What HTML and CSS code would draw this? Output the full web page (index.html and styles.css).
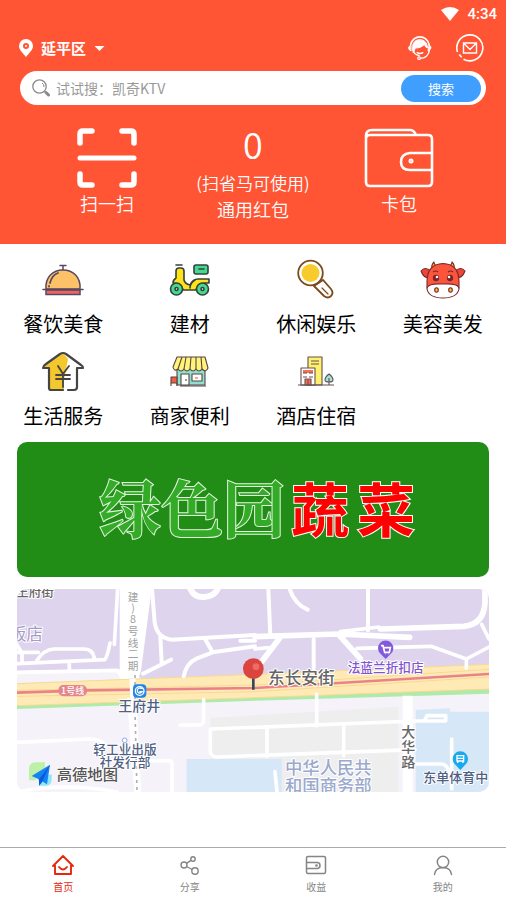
FILE: index.html
```html
<!DOCTYPE html>
<html lang="zh-CN">
<head>
  <meta charset="UTF-8" />
  <meta name="viewport" content="width=device-width, initial-scale=1" />
  <title>首页</title>
  <link rel="stylesheet" href="styles.css">
</head>
<body>

<header class="header">
  <div class="status-bar">
    <svg width="18" height="14" viewBox="0 0 18 14"><path d="M0 3Q9-3 18 3L9 14Z" fill="#fff"/></svg>
    <span>4:34</span>
  </div>

  <div class="top-row">
    <button class="location" type="button">
      <svg width="14" height="18" viewBox="0 0 14 18"><path fill="#fff" fill-rule="evenodd" d="M7 0a7 7 0 0 1 7 7c0 4-4 7-7 11C4 14 0 11 0 7a7 7 0 0 1 7-7zm0 4a3 3 0 1 0 0 6 3 3 0 0 0 0-6z"/><circle cx="7" cy="7" r="1" fill="#fff"/></svg>
      <span>延平区</span>
      <svg width="11" height="5" viewBox="0 0 12 6"><path d="M0 0h12L6 6z" fill="#fff"/></svg>
    </button>
    <div class="top-actions">
      <button class="icon-btn" type="button" aria-label="客服">
        <svg width="26" height="28" viewBox="0 0 28 28" fill="none" stroke="#fff" stroke-linecap="round">
          <path d="M4 10C6 4 10 2 14 2s9 3 10 9" stroke-width="1.800"/>
          <path d="M4 11c-3 1-3 5 0 6zM24 11c3 1 2 5-1 6z" fill="#fff"/>
          <path d="M6 13C6 7 10 5 14 5s8 3 8 9c-2-1-3-2-3-4-3 3-6 4-10 4l-2 5z" fill="#fff"/>
          <path d="M6 15c1 4 3 7 7 7M24 17c-1 5-5 8-10 8M11 19q3 2 6 0" stroke-width="1.500"/>
          <circle cx="13" cy="25" r="1.400" fill="#ff5534" stroke-width="1.300"/>
        </svg>
      </button>
      <button class="icon-btn" type="button" aria-label="消息">
        <svg width="28" height="28" viewBox="0 0 28 28" fill="none" stroke="#fff" stroke-width="1.600">
          <path d="M1.500 18A13 13 0 1 1 7.500 25.200M3.200 20.500l2.500 2.800"/>
          <path d="M7.500 9h13v10h-13zM8 9.500l6 6 6-6" stroke-width="1.400"/>
        </svg>
      </button>
    </div>
  </div>

  <form class="search">
    <svg width="18" height="18" viewBox="0 0 18 18" fill="none" stroke="#8a8a8a"><circle cx="7.500" cy="7.500" r="6.700" stroke-width="1.300"/><path d="M10 4q2 1 2 4" /><path d="M12.500 12.500l1.500 1" stroke-width="1.500"/><path d="M14 13.500l2.500 2.500" stroke-width="3" stroke-linecap="round"/></svg>
    <input class="search-input" type="text" placeholder="试试搜：凯奇KTV" aria-label="搜索">
    <button class="search-btn" type="button">搜索</button>
  </form>

  <div class="quick">
    <a class="quick-item" href="#">
      <svg width="60" height="60" viewBox="0 0 60 60" fill="none" stroke="#fff" stroke-width="5.500" stroke-linecap="round" stroke-linejoin="round">
        <path d="M3 15V6q0-3 3-3h9M45 3h9q3 0 3 3v9M3 46v8q0 3 3 3h9M45 57h9q3 0 3-3v-8"/>
        <path d="M3 30h54" stroke-width="5"/>
      </svg>
      <span class="thin">扫一扫</span>
    </a>
    <a class="quick-item" href="#">
      <span class="count">0</span>
      <span class="hint">(扫省马可使用)</span>
      <span>通用红包</span>
    </a>
    <a class="quick-item" href="#">
      <svg width="70" height="60" viewBox="0 0 70 60" fill="none" stroke="#fff" stroke-width="2.600" stroke-linejoin="round">
        <path d="M2 11V54q0 4 4 4h58q4 0 4-4V11q0-4-4-4H6q-4 0-4 4V8q0-6 6-6h38q4 0 6 5"/>
        <path d="M68 25H46q-9 1-9 9t9 8h22"/>
        <circle cx="47" cy="33" r="1" stroke-width="3"/>
      </svg>
      <span class="thin">卡包</span>
    </a>
  </div>
</header>

<main>
  <nav class="category" aria-label="分类">
    <a class="category-item" href="#">
      <svg width="44" height="44" viewBox="0 0 44 44" fill="none" stroke="#574862" stroke-width="1.500" stroke-linecap="round">
        <path d="M19 7.500h6M22 8v4"/>
        <path d="M5 31C4 19 12 12 22 12s18 7 17 19z" fill="#fdc168"/>
        <path d="M5 32h34v4.500H5z" fill="#ef6461"/>
        <path d="M2 31.500h40"/>
        <path d="M9 25q2-8 8-10M8 28v.5" stroke-width="1.800"/>
      </svg>
      <span>餐饮美食</span>
    </a>
    <a class="category-item" href="#">
      <svg width="44" height="44" viewBox="0 0 44 44" fill="none" stroke="#34413f" stroke-width="1.600" stroke-linecap="round" stroke-linejoin="round">
        <path d="M8 7h6"/>
        <path d="M5 25q0-3 3-5V13q0-3 3-3h2q3 0 3 3v9q1 4 6 5 3-6 8-6h11v4h-4q-8 1-9 7H15q-2-7-10-7z" fill="#ffe21a"/>
        <rect x="26" y="7" width="14" height="9" rx="2" fill="#45d990"/><path d="M31 11h5"/>
        <circle cx="8.500" cy="31" r="6" fill="#45d990"/><circle cx="34.500" cy="31" r="6" fill="#45d990"/>
        <circle cx="8.500" cy="31" r="1.500" fill="#fff"/><circle cx="34.500" cy="31" r="1.500" fill="#fff"/>
        <path d="M22 30q0-5 5-8"/>
      </svg>
      <span>建材</span>
    </a>
    <a class="category-item" href="#">
      <svg width="44" height="44" viewBox="0 0 44 44" fill="none" stroke="#7b4a1d" stroke-linecap="round">
        <path d="M20 28l10 10q4 3 7 0t0-7l-8-9z" fill="#fff" stroke-width="1.800"/>
        <path d="M28 30l6 6" stroke-width="1.200"/>
        <circle cx="16.500" cy="15" r="12.300" fill="#fff" stroke-width="1.800"/>
        <circle cx="16.500" cy="15" r="9" fill="#f8cb2c" stroke="none"/>
      </svg>
      <span>休闲娱乐</span>
    </a>
    <a class="category-item" href="#">
      <svg width="46" height="44" viewBox="0 0 44 44" fill="none" stroke="#7b252b" stroke-width="1.100" stroke-linejoin="round">
        <path d="M11 11q-1-4 2-7 0 3 4 5zM33 11q1-4-2-7 0 3-4 5z" fill="#ffbd2b"/>
        <path d="M10 13Q4 8 0 13q3 8 8 6zM34 13q6-5 10 0-3 8-8 6z" fill="#e84736"/>
        <path d="M22 5.500Q6 6 6 24v6h32v-6Q38 6 22 5.500z" fill="#fb563c"/>
        <path d="M22 26q-16-1-16 5 2 9 16 9t16-9q0-6-16-5z" fill="#fff"/>
        <circle cx="15" cy="20" r="2.600" fill="#7b252b"/><circle cx="29" cy="20" r="2.600" fill="#7b252b"/>
        <circle cx="16" cy="19" r="1.300" fill="#fff" stroke="none"/><circle cx="28" cy="19" r="1.300" fill="#fff" stroke="none"/>
        <ellipse cx="15.500" cy="32" rx="1.800" ry="2.200" fill="#ffbd2b"/><ellipse cx="29.500" cy="32" rx="1.800" ry="2.200" fill="#ffbd2b"/>
        <path d="M12 14q3-2 5 0M27 14q3-2 5 0"/>
      </svg>
      <span>美容美发</span>
    </a>
    <a class="category-item" href="#">
      <svg width="44" height="44" viewBox="0 0 44 44" fill="none" stroke="#454545" stroke-width="2.200" stroke-linecap="round" stroke-linejoin="round">
        <path d="M22 3L2 17h6v21q0 2 2 2h13V30l4-21z" fill="#f4c72c" stroke="none"/>
        <path d="M22 40H10q-2 0-2-2V18H2q0-2 3-4L19 4q3-2 6 0l15 11q2 1 2 3h-6v19q0 3-3 3h-6"/>
        <path d="M17 16l5 8 6-8M22 24v13M15 25h14M15 29h14" stroke-width="1.800"/>
      </svg>
      <span>生活服务</span>
    </a>
    <a class="category-item" href="#">
      <svg width="44" height="44" viewBox="0 0 44 44" fill="none" stroke="#5a4545" stroke-width="1.100" stroke-linejoin="round">
        <path d="M9 18h28v17H9z" fill="#8ee0cf"/>
        <path d="M9 7h28l3 11q-2 5-6 1-3 4-6 0-3 4-6 0-3 4-6 0-3 4-6 0-4 3-5-2z" fill="#fff37a"/>
        <path d="M14 7l-4 12M18 7l-2 12M23 7l-1 12M28 7v12M33 7l1 12"/>
        <path d="M13 24h8v11h-8zM24 24h10v7H24z" fill="#fff"/>
        <path d="M3 27h6v6H3z" fill="#f35c3c"/><path d="M3 33v3M9 33v3M12 36h26M18 29v2"/>
        <path d="M27 28h3" stroke="#f35c3c"/>
      </svg>
      <span>商家便利</span>
    </a>
    <a class="category-item" href="#">
      <svg width="44" height="44" viewBox="0 0 44 44" fill="none" stroke="#65504f" stroke-width="1.100" stroke-linejoin="round">
        <path d="M14 7h14v28H14z" fill="#fff06e"/>
        <path d="M17 11h8M17 14h8"/>
        <path d="M7 18h14v17H7z" fill="#fff"/>
        <path d="M9 20h10v3H9z" fill="#fb6c54" stroke="none"/>
        <path d="M9 23h4M15 23h4M9 27h4M15 27h4"/>
        <path d="M11 29h6v6h-6z" fill="#fb6c54"/><path d="M14 30v5"/>
        <path d="M35 24q-4 3-4 6 0 2 4 2t4-2q0-3-4-6z" fill="#9fe5db"/><path d="M35 28v7M4 35h36"/>
      </svg>
      <span>酒店住宿</span>
    </a>
  </nav>

  <section class="banner">
    <span class="banner-green">绿色园</span>
    <span class="banner-red"><span>蔬</span><span>菜</span></span>
  </section>

  <section class="map" aria-label="地图">
    <svg class="map-svg" viewBox="0 0 1416 609">
      <!-- land -->
      <path fill="#f6f2f9" d="M0 0h1416v609H0z"/>
      <path fill="#ded4ee" d="M0 0h1416v226L714 258 380 270 310 240 0 246z"/>
      <path fill="#eeeeef" d="M580 387l564-34v256H580z"/>
      <path fill="#d6e7f7" d="M509 510h285v99H509zM1196 363l103-5v10h117v241h-220z"/>
      <path fill="#fff" d="M308 0h96l-32 245-10 30h-54z"/>

      <!-- avenue with the metro line -->
      <path fill="#aeeaa9" d="M0 348l714-24 702-28v18L714 335 0 360z"/>
      <path fill="#ffeab5" d="M0 283l714-27 702-30v74L714 326 0 350z"/>
      <g fill="none" stroke="#f6d996" stroke-width="3">
        <path d="M0 284l714-28 702-30M0 304l714-16 702-47M0 322l714-14 702-44M0 350l714-24 702-26"/>
      </g>
      <path fill="none" stroke="#ea8288" stroke-width="8" d="M0 311l210-7 504-7 702-42"/>

      <!-- roads -->
      <g fill="none" stroke="#fff" stroke-linejoin="round" stroke-linecap="round">
        <path stroke-width="11" d="M0 224l263-12q8-8 16-50M302 0l-10 166M60 214q20-32 50-34h90q30 0 32 32M157 218v26M0 190h64M0 168l15 24v30M0 250l300-6 16 20"/>
        <path stroke-width="12" d="M405 0l8 100q6 46 50 52l251-14M430 144l4 76M378 254l84-42M563 148l24 42M500 262q8-40 40-54l47-18 127-18M670 155h44"/>
        <path stroke-width="18" d="M520 0q12 26 42 24t40-24"/>
        <path stroke-width="12" d="M754 0l6 140M818 0q15 45 54 62M1053 0v124M890 150v88"/>
        <path stroke-width="17" d="M714 143l250-8 214 10M965 137l65 72M792 142l-58 76M1090 120l250-8q60-6 64-70V0"/>
        <path stroke-width="11" d="M970 128l116-14M1020 178l222-6 106 38v28M1348 210l68-36M1394 106l22 44M714 180l40-4"/>
        <path stroke-width="11" d="M560 332v60q0 16-16 16h-54M0 460l220-10q30 0 45 18M0 609q150-30 300 0M300 515h155q10 0 10 12v82"/>
        <path stroke-width="8" d="M334 330l22 279"/>
        <path stroke-width="11" d="M899 316v94M580 420l616-24M580 420v66q0 16 18 18l596-22M750 416v86M980 410v90M1196 396h90v-16h-56l-8 16M1304 450v150M774 548l6 61M1196 525h76q20 0 26 30"/>
        <path stroke-width="30" d="M1172 320v289" stroke-linecap="butt"/>
      </g>
      <path fill="none" stroke="#fff" stroke-width="18" d="M346 270l18 339"/>
      <path fill="none" stroke="#b0b0b2" stroke-width="5" stroke-dasharray="9 12" d="M354 258v104l6 247"/>

      <!-- place names -->
      <g class="map-text" text-anchor="middle">
        <text x="54" y="22" font-size="38" fill="#666">王府街</text>
        <text x="28" y="152" font-size="50" fill="#a69bc7" class="light">饭店</text>
        <g font-size="32" fill="#a0a0a0" class="light">
          <text x="348" y="36">建</text><text x="348" y="68">)</text><text x="348" y="102">8</text><text x="348" y="137">号</text><text x="348" y="173">线</text><text x="348" y="208">二</text><text x="348" y="244">期</text>
        </g>
        <rect x="124" y="288" width="86" height="34" rx="15" fill="#e4868c" stroke="none"/>
        <text x="167" y="315" font-size="27" class="plain">1号线</text>
        <text x="367" y="366" font-size="42" fill="#4f6084">王府井</text>
        <text x="324" y="496" font-size="38" fill="#4f6084">轻工业出版</text>
        <text x="324" y="535" font-size="38" fill="#4f6084">社发行部</text>
        <text x="853" y="284" font-size="50" fill="#666">东长安街</text>
        <text x="1106" y="248" font-size="38" fill="#8154d2">法蓝兰折扣店</text>
        <g font-size="42" fill="#666"><text x="1174" y="444">大</text><text x="1174" y="489">华</text><text x="1174" y="534">路</text></g>
        <text x="934" y="556" font-size="52" fill="#9aa9cc">中华人民共</text>
        <text x="934" y="608" font-size="52" fill="#9aa9cc">和国商务部</text>
        <text x="1336" y="578" font-size="39" fill="#4f6084">东单体育中心</text>
      </g>

      <!-- markers -->
      <rect x="348" y="286" width="40" height="40" rx="12" fill="#2186e8"/>
      <circle cx="368" cy="306" r="13" fill="none" stroke="#fff" stroke-width="4"/><path d="M377 299q-16-6-16 7 4 12 14 2h-8" fill="none" stroke="#fff" stroke-width="4"/>
      <circle cx="323" cy="454" r="7" fill="#fff" stroke="#91a5ee" stroke-width="3"/>
      <path d="M1106 210l-14-14a23 23 0 1 1 28 0z" fill="#8359dc"/>
      <path d="M1092 170h6l5 20h14l3-14h-20M1104 195h1M1115 195h1" fill="none" stroke="#fff" stroke-width="5"/>
      <path d="M1330 543l-14-15a23 23 0 1 1 28 0z" fill="#17aaf0"/>
      <path d="M1320 500h20v16h-20zM1320 508h20M1322 516v6M1338 516v6" fill="none" stroke="#fff" stroke-width="4"/>
      <path d="M709 262v40" stroke="#32495a" stroke-width="8"/>
      <circle cx="709" cy="239" r="31" fill="#dc4440"/><circle cx="717" cy="233" r="10" fill="#ec6d65"/>

      <!-- provider logo -->
      <path d="M36 540q0-20 20-20h28v30l-30 24H36z" fill="#bdf1a7"/>
      <path d="M62 566l42-10v14q0 20-18 20H70z" fill="#8de5fa"/>
      <path d="M99 527L90 586 66 571 44 561z" fill="#1683f5"/><path d="M99 527L66 571v20l10-13z" fill="#075ed8"/>
      <text x="119" y="573" font-size="46" class="map-logo">高德地图</text>
    </svg>
  </section>
</main>

<nav class="tabbar" aria-label="主导航">
  <a class="tab active" href="#">
    <svg width="24" height="24" viewBox="0 0 24 24" fill="none" stroke="currentColor" stroke-width="1.900" stroke-linecap="round" stroke-linejoin="round"><path d="M2 13L12 3l10 10M4 12v9h16v-9M8 14q4 5 8 0"/></svg>
    <span>首页</span>
  </a>
  <a class="tab" href="#">
    <svg width="24" height="24" viewBox="0 0 24 24" fill="none" stroke="currentColor" stroke-width="1.400"><circle cx="6" cy="12" r="3"/><circle cx="15" cy="6" r="2.200"/><circle cx="17" cy="18" r="3.200"/><path d="M8.500 10.300L13 7.300M8.500 13.500l5.800 3"/></svg>
    <span>分享</span>
  </a>
  <a class="tab" href="#">
    <svg width="24" height="24" viewBox="0 0 24 24" fill="none" stroke="currentColor" stroke-width="1.500"><rect x="2.500" y="3.500" width="19" height="17" rx="1.500"/><path d="M3 9.500h10q3 0 3 3t-3 3H3"/><circle cx="12.500" cy="12.500" r=".6"/></svg>
    <span>收益</span>
  </a>
  <a class="tab" href="#">
    <svg width="24" height="24" viewBox="0 0 24 24" fill="none" stroke="currentColor" stroke-width="1.500" stroke-linecap="round"><circle cx="12" cy="9" r="5.700"/><path d="M3.500 21.500q1-7 8.500-7t8.500 7"/></svg>
    <span>我的</span>
  </a>
</nav>

</body>
</html>
```

FILE: styles.css
```css
* {
  box-sizing: border-box;
}

body {
  margin: 0;
  min-height: 100vh;
  padding-bottom: 54px;
  font-family: "Noto Sans CJK SC", sans-serif;
  background: #fff;
  color: #000;
}

a {
  color: inherit;
  text-decoration: none;
}

button {
  border: none;
  padding: 0;
  background: none;
  color: inherit;
  font-family: inherit;
  cursor: pointer;
}

svg {
  display: block;
  flex-shrink: 0;
}

/* Header */
.header {
  background: #ff5534;
  color: #fff;
  padding-bottom: 22px;
}

.status-bar {
  display: flex;
  justify-content: flex-end;
  align-items: center;
  gap: 8px;
  height: 28px;
  padding: 0 9px;
  font: 500 15px/28px Roboto, sans-serif;
}

.top-row {
  display: flex;
  justify-content: space-between;
  align-items: center;
  height: 40px;
  padding: 0 22px 0 19px;
}

.location {
  display: flex;
  align-items: center;
  gap: 8px;
  font-size: 15px;
  line-height: 18px;
  font-weight: 700;
}

.top-actions {
  display: flex;
  gap: 23px;
}

.search {
  display: flex;
  align-items: center;
  height: 34px;
  margin: 3px 20px 0;
  padding: 0 5px 0 12px;
  gap: 6px;
  border-radius: 17px;
  background: #fff;
}

.search-input {
  flex: 1;
  min-width: 0;
  padding: 0;
  border: none;
  outline: none;
  background: none;
  font-family: inherit;
  font-size: 14px;
  color: #333;
}

.search-input::placeholder {
  color: #999;
}

.search-btn {
  width: 80px;
  height: 27px;
  border-radius: 14px;
  background: #409eff;
  color: #fff;
  font-size: 13px;
}

.quick {
  display: grid;
  grid-template-columns: repeat(3, 1fr);
  padding: 23px 34px 0;
}

.quick-item {
  display: flex;
  flex-direction: column;
  align-items: center;
  font-size: 18px;
  line-height: 26px;
  font-weight: 350;
}

.thin {
  margin-top: 2px;
}

.count {
  margin-bottom: 12px;
  font-size: 36px;
  line-height: 30px;
  font-weight: 350;
}

.hint {
  font-size: 17px;
}

/* Categories */
.category {
  display: grid;
  grid-template-columns: repeat(4, 1fr);
  row-gap: 12px;
  padding: 14px 0 12px;
}

.category-item {
  display: flex;
  flex-direction: column;
  align-items: center;
  gap: 8px;
  font-size: 20px;
  line-height: 28px;
}

/* Banner */
.banner {
  display: flex;
  justify-content: center;
  align-items: center;
  gap: 6px;
  height: 135px;
  margin: 0 17px;
  padding: 0 0 6px 8px;
  border-radius: 10px;
  background: #218d17;
}

.banner-green {
  font-family: "Noto Serif CJK SC", "Noto Sans CJK SC", serif;
  font-size: 62px;
  font-weight: 700;
  color: #34ab27;
  -webkit-text-stroke: 2px #e4f5e1;
  paint-order: stroke fill;
}

.banner-red {
  display: flex;
  gap: 8px;
  font-size: 58px;
  font-weight: 700;
  color: #f00;
  -webkit-text-stroke: 2px #fff;
  paint-order: stroke fill;
}

/* Map */
.map {
  margin: 12px 17px;
  border-radius: 10px;
  overflow: hidden;
}

.map-svg {
  width: 100%;
  height: auto;
}

.map-text {
  font-weight: 500;
  stroke: #fff;
  stroke-width: 6px;
  stroke-linejoin: round;
  paint-order: stroke;
}

.map-text .light {
  font-weight: 400;
}

.map-text .plain {
  fill: #fff;
  stroke: none;
}

.map-logo {
  fill: #555;
  font-weight: 500;
  stroke: #fff;
  stroke-width: 4px;
  paint-order: stroke;
}

/* Bottom tabs */
.tabbar {
  position: fixed;
  left: 0;
  right: 0;
  bottom: 0;
  display: grid;
  grid-template-columns: repeat(4, 1fr);
  height: 53px;
  padding-top: 5px;
  border-top: 1px solid #aaa;
  background: #fff;
}

.tab {
  display: flex;
  flex-direction: column;
  align-items: center;
  gap: 2px;
  font-size: 10px;
  line-height: 16px;
  color: #858585;
}

.tab.active {
  color: #e8260c;
}
```
